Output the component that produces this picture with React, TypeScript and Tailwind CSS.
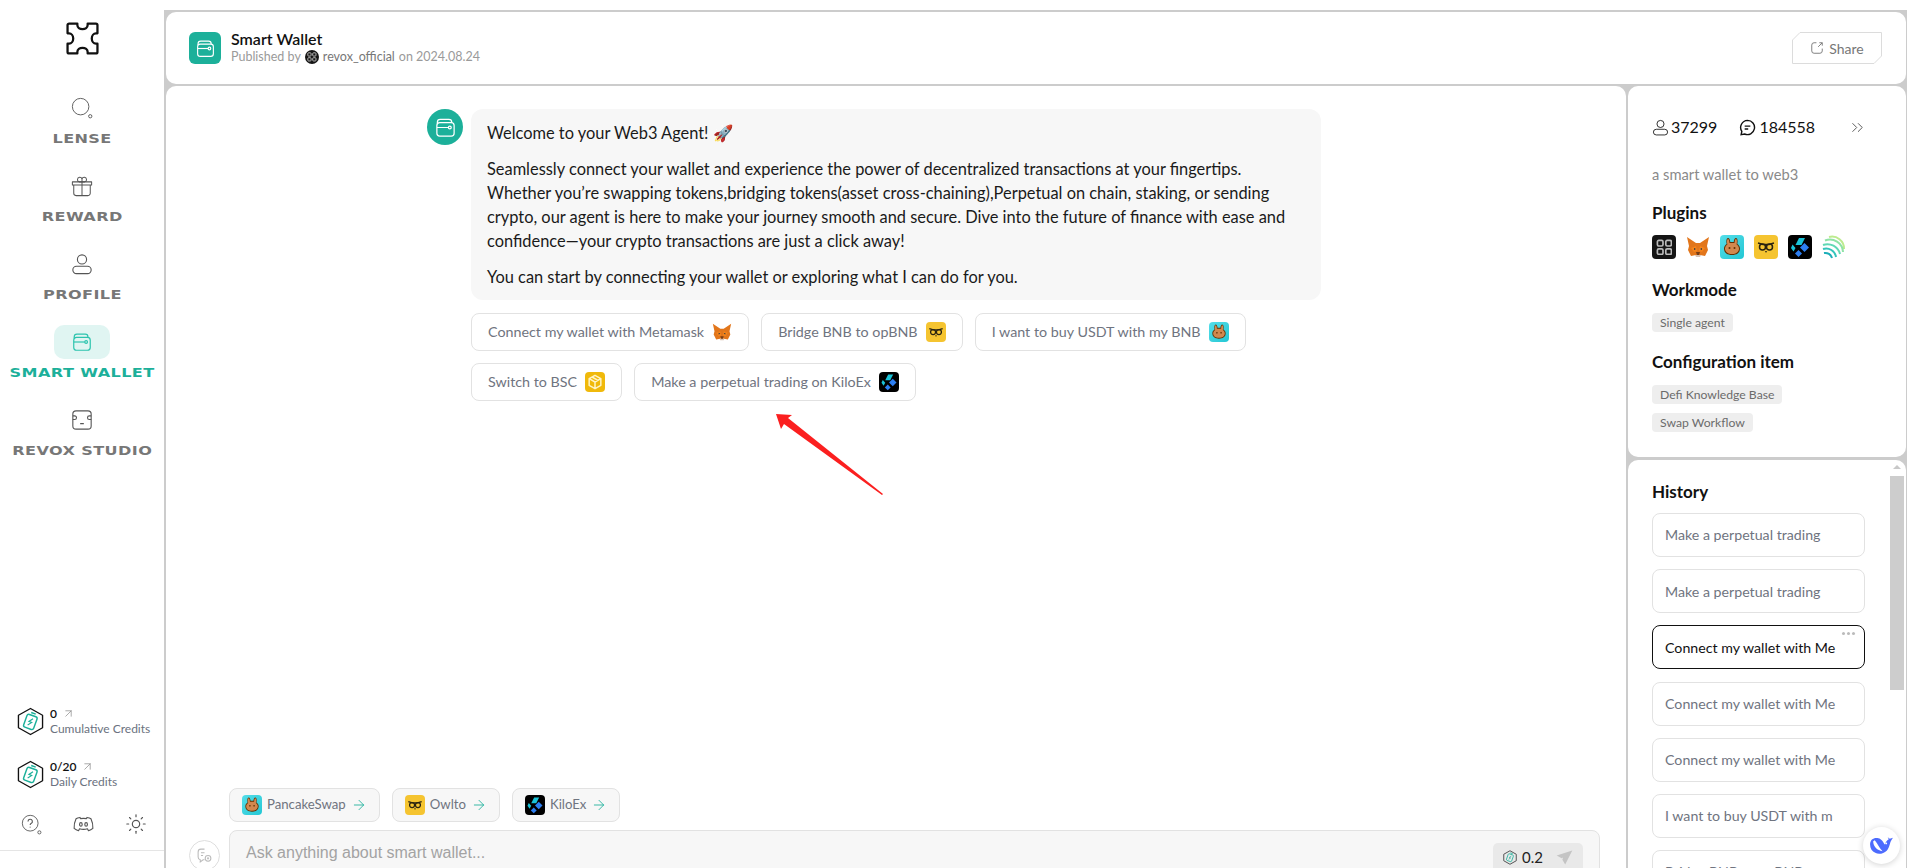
import { ArrowRight, ArrowUpRight, ChevronsRight, Sun } from "lucide-react";

function WalletIcon({ className }: { className?: string }) {
  return (
    <svg viewBox="0 0 24 24" fill="none" stroke="currentColor" strokeWidth="1.3" className={className}>
      <path d="M3.5 8V6.5a3 3 0 0 1 3-3h9a3 3 0 0 1 3 3V7" />
      <rect x="3" y="7" width="18" height="14" rx="3" />
      <path d="M3 12h12" />
      <circle cx="16.5" cy="12" r="1.5" />
    </svg>
  );
}

function LensIcon({ className }: { className?: string }) {
  return (
    <svg viewBox="0 0 24 24" fill="none" stroke="currentColor" strokeWidth="1" className={className}>
      <circle cx="10.5" cy="10.5" r="9" />
      <circle cx="21" cy="21" r="1.8" />
    </svg>
  );
}

function GiftIcon({ className }: { className?: string }) {
  return (
    <svg viewBox="0 0 24 24" fill="none" stroke="currentColor" strokeWidth="1.1" className={className}>
      <path d="M1.5 7.5h21V11h-21z" strokeLinejoin="round" />
      <path d="M3 11v9a2.5 2.5 0 0 0 2.5 2.5h13A2.5 2.5 0 0 0 21 20v-9" />
      <path d="M12 7.5v15" />
      <path d="M12 7.5H9a2.5 2.5 0 1 1 3-3zM12 7.5h3a2.5 2.5 0 1 0-3-3z" />
    </svg>
  );
}

function UserIcon({ className }: { className?: string }) {
  return (
    <svg viewBox="0 0 24 24" fill="none" stroke="currentColor" strokeWidth="1.2" className={className}>
      <circle cx="12" cy="7" r="5" />
      <rect x="2" y="14.5" width="20" height="8" rx="4" />
    </svg>
  );
}

function RobotIcon({ className }: { className?: string }) {
  return (
    <svg viewBox="0 0 24 24" fill="none" stroke="currentColor" strokeWidth="1.2" className={className}>
      <rect x="2" y="2" width="20" height="20" rx="3.5" />
      <path d="M2 7.5h2a2 2 0 0 1 0 4H2M22 7.5h-2a2 2 0 0 0 0 4h2M10 16h4" />
    </svg>
  );
}

function PuzzleLogo() {
  return (
    <svg viewBox="0 0 32 32" fill="none" stroke="#111" strokeWidth="2.2" strokeLinejoin="round" className="h-[33px] w-[33px]">
      <path d="M3 1.5H11V3a5 4 0 0 0 10 0V1.5H29A1.5 1.5 0 0 1 30.5 3V11H29a4 5 0 0 0 0 10h1.5V29A1.5 1.5 0 0 1 29 30.5H21V29a5 4 0 0 0-10 0v1.5H3A1.5 1.5 0 0 1 1.5 29V21H3a4 5 0 0 0 0-10H1.5V3A1.5 1.5 0 0 1 3 1.5z" />
    </svg>
  );
}

function CreditHex({ small }: { small?: boolean }) {
  return (
    <svg viewBox="0 0 28 30" fill="none" className={small ? "h-[15px] w-[14px]" : "h-[29px] w-[27px]"}>
      <path d="M14 1.5 26.5 8.5v13L14 28.5 1.5 21.5v-13z" stroke={small ? "#555" : "#111"} strokeWidth={small ? 2 : 1.4} strokeLinejoin="round" />
      <g transform="rotate(20 14 15)" stroke="#1cb09a" strokeWidth="1.5">
        <rect x="8.5" y="8.5" width="11" height="14" rx="2" />
        <path d="M11.5 6h5" />
        <path d="M15.5 11.5 12.5 15.5h3l-3 4" strokeWidth="1.2" />
      </g>
    </svg>
  );
}

function HelpIcon() {
  return (
    <svg viewBox="0 0 24 24" fill="none" stroke="#555" strokeWidth="1" className="h-[21px] w-[21px]">
      <circle cx="10.5" cy="10.5" r="9" />
      <path d="M8 8.5a2.5 2.5 0 1 1 3.5 2.3c-.7.3-1 .8-1 1.7M10.5 14.5v1" strokeWidth="1.3" />
      <circle cx="21" cy="21" r="1.8" />
    </svg>
  );
}

function DiscordIcon() {
  return (
    <svg viewBox="0 0 24 20" fill="none" stroke="#555" strokeWidth="1.3" strokeLinejoin="round" className="h-[18px] w-[21px]">
      <path d="M8 2.5C6 2.8 4.5 3.3 3.5 4 1.8 7.5 1 11 1.3 15c1.5 1.3 3.2 2.2 5 2.7l1.2-2.2c2.8.8 6.2.8 9 0l1.2 2.2c1.8-.5 3.5-1.4 5-2.7.3-4-.5-7.5-2.2-11-1-.7-2.5-1.2-4.5-1.5l-.6 1.3c-2.2-.3-4.6-.3-6.8 0z" />
      <ellipse cx="9" cy="10.5" rx="1.5" ry="2" />
      <ellipse cx="15" cy="10.5" rx="1.5" ry="2" />
    </svg>
  );
}

function RevoxBadge({ className }: { className: string }) {
  return (
    <span className={`flex items-center justify-center bg-[#151515] ${className}`}>
      <svg viewBox="0 0 24 24" fill="none" stroke="#bbb" strokeWidth="2.4" className="h-[70%] w-[70%]">
        <rect x="2" y="2" width="8" height="8" rx="2" />
        <rect x="14" y="2" width="8" height="8" rx="2" />
        <rect x="2" y="14" width="8" height="8" rx="2" />
        <rect x="14" y="14" width="8" height="8" rx="2" />
      </svg>
    </span>
  );
}

function Fox({ className }: { className: string }) {
  return (
    <svg viewBox="0 0 24 24" className={className}>
      <path fill="#e2761b" d="M1 2l9 6h4l9-6-2 9 1 4-3 6-5-1h-4l-5 1-3-6 1-4z" />
      <path fill="#f6851b" d="M5 13l5-2 1 5-3 1zM19 13l-5-2-1 5 3 1z" />
      <path fill="#233447" d="M8 13l2 1-2 1zM16 13l-2 1 2 1z" />
      <path fill="#d7c1b3" d="M9 20h6l-1 2h-4z" />
      <path fill="#763d16" d="M10 17h4l-1 3h-2z" />
    </svg>
  );
}

function Bunny({ className }: { className: string }) {
  return (
    <svg viewBox="0 0 24 24" className={`rounded-[4px] bg-gradient-to-br from-[#53dee9] to-[#1fc7d4] ${className}`}>
      <path fill="#633001" d="M8 3c1.5 0 2 2 2.3 4h3.4c.3-2 .8-4 2.3-4s2 3 1.3 6c1.5 1 2.700 2.500 2.700 4.500C20 18 16.500 20 12 20s-8-2-8-6.500c0-2 1.200-3.500 2.700-4.500C6 6 6.500 3 8 3z" />
      <path fill="#d1884f" d="M8 4c1 0 1.300 2 1.500 4h5c.2-2 .5-4 1.500-4s1.300 3 .6 5.500C18 10.500 19 12 19 13.500 19 17 16 19 12 19s-7-2-7-5.500c0-1.500 1-3 2.400-4C6.700 7 7 4 8 4z" />
      <circle cx="9.5" cy="13" r="1" fill="#633001" />
      <circle cx="14.5" cy="13" r="1" fill="#633001" />
    </svg>
  );
}

function Owl({ className }: { className: string }) {
  return (
    <svg viewBox="0 0 24 24" className={`rounded-[4px] bg-[#f5c430] ${className}`}>
      <path fill="none" stroke="#2b2410" strokeWidth="1.5" d="M4 8l5 1.5h6L20 8" />
      <circle cx="8.5" cy="12" r="3" fill="none" stroke="#2b2410" strokeWidth="1.5" />
      <circle cx="15.5" cy="12" r="3" fill="none" stroke="#2b2410" strokeWidth="1.5" />
      <path fill="#2b2410" d="M11 16h2l-1 2z" />
    </svg>
  );
}

function Kilo({ className }: { className: string }) {
  return (
    <svg viewBox="0 0 24 24" className={`rounded-[4px] bg-black ${className}`}>
      <path fill="#19c3d8" d="M11 3h6l-3.5 7h-6z" />
      <path fill="#19c3d8" d="M4.5 9.500l3 3.500-2 3.500-2.500-3.500z" />
      <path fill="#2d7ff2" d="M16.5 8l4.500 4.500-4.500 4.500-4.500-4.500z" />
      <path fill="#2d7ff2" d="M10.5 15l3.500 3.500-3.500 3.500-3.500-3.500z" />
    </svg>
  );
}

function Bsc({ className }: { className: string }) {
  return (
    <svg viewBox="0 0 24 24" className={`rounded-[4px] bg-[#f0b90b] ${className}`}>
      <path fill="none" stroke="#fff3c4" strokeWidth="1.8" strokeLinejoin="round" d="M12 4l7 4v8l-7 4-7-4V8zM5 8l7 4 7-4M12 12v8M8.5 6l7 4" />
    </svg>
  );
}

function Stripes({ className }: { className: string }) {
  return (
    <svg viewBox="0 0 24 24" fill="none" strokeWidth="2" className={className}>
      <path stroke="#bdeb8f" d="M7 2a12 12 0 0 1 15 12" />
      <path stroke="#8fe3a6" d="M3 5.5A13 13 0 0 1 21 17" />
      <path stroke="#5fd8b4" d="M1 10a13 13 0 0 1 17 9" />
      <path stroke="#33c4bb" d="M1 14a10 10 0 0 1 13 8" />
      <path stroke="#1caeb8" d="M2 18a7 7 0 0 1 8 5" />
    </svg>
  );
}

function WhaleButton() {
  return (
    <div className="absolute left-[1863px] top-[827px] flex h-[37px] w-[37px] items-center justify-center rounded-full bg-white shadow-[0_1px_6px_rgba(0,0,0,0.18)]">
      <svg viewBox="0 0 26 20" className="h-[21px] w-[27px]">
        <path fill="#4d6bfe" d="M2 9C2 4 6 2 10 3c3 .5 5 4 6 6 1-2 2-4 4-5l-1-2 2 1.5 3-1-1.5 2.5C21 7 21 12 18 15c-3 3-8 4-11 2-3-1.5-5-4-5-8z" />
        <path fill="#fff" d="M5 6c0 5 4 9 9 9.5C10.5 12 9.5 8.5 6.5 5z" />
        <circle cx="17.5" cy="8" r="0.9" fill="#fff" />
      </svg>
    </div>
  );
}

const navItems = [
  { label: "LENSE", icon: <LensIcon className="h-[22px] w-[22px]" /> },
  { label: "REWARD", icon: <GiftIcon className="h-[22px] w-[22px]" /> },
  { label: "PROFILE", icon: <UserIcon className="h-[22px] w-[22px]" /> },
  { label: "SMART WALLET", icon: <WalletIcon className="h-[22px] w-[22px]" />, active: true },
  { label: "REVOX STUDIO", icon: <RobotIcon className="h-[22px] w-[22px]" /> },
];

function Sidebar() {
  return (
    <aside className="flex h-full w-[164px] shrink-0 flex-col items-center">
      <div className="mt-[21px] mb-[36px] flex h-[34px] items-center">
        <PuzzleLogo />
      </div>
      <nav className="flex w-full flex-col items-center gap-[9px]">
        {navItems.map((item) => (
          <div key={item.label} className="flex h-[69px] w-full flex-col items-center">
            <div
              className={`flex h-[34px] w-[56px] items-center justify-center rounded-[10px] ${
                item.active ? "bg-[#e0f5f2] text-[#2cc4ae]" : "text-[#555]"
              }`}
            >
              {item.icon}
            </div>
            <span
              className={`mt-[7px] origin-center scale-x-[1.34] whitespace-nowrap font-['DejaVu_Sans'] text-[12px] font-bold leading-[14px] tracking-[0.3px] ${
                item.active ? "text-[#1cb09a]" : "text-[#777]"
              }`}
            >
              {item.label}
            </span>
          </div>
        ))}
      </nav>
      <div className="mt-auto flex w-full flex-col pl-[17px]">
        <CreditRow value="0" label="Cumulative Credits" />
        <div className="h-[23px]" />
        <CreditRow value="0/20" label="Daily Credits" />
        <div className="mt-[24px] flex w-[130px] items-center justify-between pl-[4px]">
          <HelpIcon />
          <DiscordIcon />
          <Sun className="h-[22px] w-[22px] text-[#555]" strokeWidth={1.3} />
        </div>
      </div>
      <div className="mt-[15px] mb-[17px] h-[1px] w-full bg-[#e5e5e5]" />
    </aside>
  );
}

function CreditRow({ value, label }: { value: string; label: string }) {
  return (
    <div className="flex h-[30px] items-center gap-[6px]">
      <CreditHex />
      <div className="flex flex-col">
        <span className="flex items-center gap-[5px] text-[12px] font-semibold leading-[15px] text-[#111]">
          {value}
          <ArrowUpRight className="h-[13px] w-[13px] text-[#888]" strokeWidth={1.3} />
        </span>
        <span className="text-[12px] leading-[15px] text-[#6b7280]">{label}</span>
      </div>
    </div>
  );
}

function ShareButton() {
  return (
    <button className="relative flex h-[32px] w-[90px] items-center justify-center gap-[5px] text-[14px] text-[#777]">
      <svg viewBox="0 0 90 32" fill="none" className="absolute inset-0 h-full w-full">
        <path d="M8 .5H89.5V24L82 31.5H.5V8z" stroke="#dcdcdc" />
      </svg>
      <svg viewBox="0 0 24 24" fill="none" stroke="#777" strokeWidth="1.6" className="h-[14px] w-[14px]">
        <path d="M11 3H7a4 4 0 0 0-4 4v10a4 4 0 0 0 4 4h10a4 4 0 0 0 4-4v-4" />
        <path d="M14 10l7-7M16 3h5v5" />
      </svg>
      Share
    </button>
  );
}

function Header() {
  return (
    <header className="flex h-[72px] shrink-0 items-center rounded-[10px] bg-white pl-[23px] pr-[24px]">
      <div className="flex h-[32px] w-[32px] items-center justify-center rounded-[6px] bg-[#1cb09a] text-white">
        <WalletIcon className="h-[21px] w-[21px]" />
      </div>
      <div className="ml-[10px] flex flex-col">
        <span className="text-[16px] font-semibold leading-[18px] text-[#111]">Smart Wallet</span>
        <span className="flex items-center text-[12.5px] leading-[18px] text-[#9a9a9a]">
          Published by
          <RevoxBadge className="mx-[4px] h-[14px] w-[14px] rounded-full" />
          <span className="text-[#777]">revox_official</span>
          <span className="ml-[4px]">on 2024.08.24</span>
        </span>
      </div>
      <div className="ml-auto">
        <ShareButton />
      </div>
    </header>
  );
}

function Suggestion({ text, icon }: { text: string; icon: React.ReactNode }) {
  return (
    <button className="flex h-[38px] items-center gap-[8px] rounded-[8px] border border-[#e2e2e2] bg-white px-[16px] text-[14.3px] text-[#6f7480]">
      {text}
      {icon}
    </button>
  );
}

function Chat() {
  return (
    <div className="ml-[261px] flex w-[894px] gap-[8px] pt-[23px]">
      <div className="flex h-[36px] w-[36px] shrink-0 items-center justify-center rounded-full bg-[#1cb09a] text-white">
        <WalletIcon className="h-[23px] w-[23px]" />
      </div>
      <div className="min-w-0 flex-1">
        <div className="flex flex-col gap-[12px] rounded-[12px] bg-[#f7f7f7] px-[16px] pb-[11px] pt-[12px] text-[16.4px] leading-[24px] text-[#1a1a1a]">
          <p>Welcome to your Web3 Agent! 🚀</p>
          <p>
            Seamlessly connect your wallet and experience the power of decentralized transactions at your fingertips.
            Whether you’re swapping tokens,bridging tokens(asset cross-chaining),Perpetual on chain, staking, or sending
            crypto, our agent is here to make your journey smooth and secure. Dive into the future of finance with ease
            and confidence—your crypto transactions are just a click away!
          </p>
          <p>You can start by connecting your wallet or exploring what I can do for you.</p>
        </div>
        <div className="mt-[13px] flex flex-col gap-[12px]">
          <div className="flex gap-[12px]">
            <Suggestion text="Connect my wallet with Metamask" icon={<Fox className="h-[20px] w-[20px]" />} />
            <Suggestion text="Bridge BNB to opBNB" icon={<Owl className="h-[20px] w-[20px]" />} />
            <Suggestion text="I want to buy USDT with my BNB" icon={<Bunny className="h-[20px] w-[20px]" />} />
          </div>
          <div className="flex gap-[12px]">
            <Suggestion text="Switch to BSC" icon={<Bsc className="h-[20px] w-[20px]" />} />
            <Suggestion text="Make a perpetual trading on KiloEx" icon={<Kilo className="h-[20px] w-[20px]" />} />
          </div>
        </div>
      </div>
    </div>
  );
}

function PluginChip({ name, icon }: { name: string; icon: React.ReactNode }) {
  return (
    <div className="flex h-[34px] items-center gap-[5px] rounded-[8px] border border-[#e2e2e2] bg-[#f7f7f7] px-[12px] text-[13.2px] text-[#6f7480]">
      {icon}
      {name}
      <ArrowRight className="h-[16px] w-[16px] text-[#1cb09a]" strokeWidth={1.3} />
    </div>
  );
}

function Composer() {
  return (
    <div className="mb-[-12px] flex flex-col pl-[23px] pr-[26px]">
      <div className="ml-[40px] flex gap-[12px]">
        <PluginChip name="PancakeSwap" icon={<Bunny className="h-[20px] w-[20px]" />} />
        <PluginChip name="Owlto" icon={<Owl className="h-[20px] w-[20px]" />} />
        <PluginChip name="KiloEx" icon={<Kilo className="h-[20px] w-[20px]" />} />
      </div>
      <div className="mt-[8px] flex items-start gap-[9px]">
        <div className="mt-[10px] flex h-[31px] w-[31px] shrink-0 items-center justify-center rounded-full border border-[#dedede]">
          <svg viewBox="0 0 24 24" fill="none" stroke="#bbb" strokeWidth="1.5" className="h-[17px] w-[17px]">
            <path d="M12 3H7a4 4 0 0 0-4 4v7a4 4 0 0 0 3 4v3l4-3h2" />
            <path d="M7 8h5M7 12h3" />
            <circle cx="17" cy="16" r="4" />
            <path d="M17 14.5v3M15.5 16h3" />
          </svg>
        </div>
        <div className="flex h-[50px] flex-1 items-start rounded-[8px] border border-[#e2e2e2] bg-[#f7f7f7] pl-[16px] pr-[16px] pt-[12px]">
          <span className="font-['Liberation_Sans'] text-[16px] leading-[20px] text-[#a3a3a3]">
            Ask anything about smart wallet...
          </span>
          <div className="ml-auto flex h-[28px] w-[90px] items-center justify-center gap-[5px] rounded-t-[5px] bg-[#e9e9e9]">
            <CreditHex small />
            <span className="text-[15px] text-[#222]">0.2</span>
            <svg viewBox="0 0 24 24" className="ml-[8px] h-[17px] w-[17px]">
              <path fill="#c4c4c4" d="M23 2 1 9l7 4 2-1-1 3 4 7z" />
            </svg>
          </div>
        </div>
      </div>
    </div>
  );
}

function InfoPanel() {
  return (
    <section className="flex h-[371px] shrink-0 flex-col rounded-[10px] bg-white pl-[24px] pr-[24px] pt-[31px]">
      <div className="flex items-center text-[16px] leading-[20px] text-[#111]">
        <UserIcon className="h-[17px] w-[17px]" />
        <span className="ml-[2px]">37299</span>
        <svg viewBox="0 0 24 24" fill="none" stroke="#111" strokeWidth="2" className="ml-[22px] h-[17px] w-[17px]">
          <path d="M12 2a10 10 0 1 1-4 19.2L3 22l1-4.500A10 10 0 0 1 12 2z" />
          <path d="M8 10h8M8 14h5" />
        </svg>
        <span className="ml-[3px]">184558</span>
        <ChevronsRight className="ml-[33px] h-[19px] w-[19px] text-[#555]" strokeWidth={1.2} />
      </div>
      <p className="mt-[27px] text-[14.7px] leading-[20px] text-[#8a8a8a]">a smart wallet to web3</p>
      <h3 className="mt-[18px] text-[17px] font-bold leading-[22px] text-[#111]">Plugins</h3>
      <div className="mt-[11px] flex gap-[10px]">
        <RevoxBadge className="h-[24px] w-[24px] rounded-[4px]" />
        <Fox className="h-[24px] w-[24px]" />
        <Bunny className="h-[24px] w-[24px]" />
        <Owl className="h-[24px] w-[24px]" />
        <Kilo className="h-[24px] w-[24px]" />
        <Stripes className="h-[24px] w-[24px]" />
      </div>
      <h3 className="mt-[20px] text-[17px] font-bold leading-[22px] text-[#111]">Workmode</h3>
      <div className="mt-[12px] flex">
        <Tag>Single agent</Tag>
      </div>
      <h3 className="mt-[19px] text-[17px] font-bold leading-[22px] text-[#111]">Configuration item</h3>
      <div className="mt-[12px] flex flex-col items-start gap-[9px]">
        <Tag>Defi Knowledge Base</Tag>
        <Tag>Swap Workflow</Tag>
      </div>
    </section>
  );
}

function Tag({ children }: { children: React.ReactNode }) {
  return (
    <span className="rounded-[4px] bg-[#eeeeee] px-[8px] text-[12.2px] leading-[19px] text-[#6b6b6b]">{children}</span>
  );
}

const historyItems = [
  "Make a perpetual trading",
  "Make a perpetual trading",
  "Connect my wallet with Me",
  "Connect my wallet with Me",
  "Connect my wallet with Me",
  "I want to buy USDT with m",
  "Bridge BNB to opBNB",
];

function HistoryPanel() {
  return (
    <section className="flex min-h-0 flex-1 overflow-hidden rounded-t-[10px] bg-white">
      <div className="w-[262px] shrink-0 pl-[24px] pt-[21px]">
        <h3 className="text-[17px] font-bold leading-[22px] text-[#111]">History</h3>
        <div className="mt-[10px] flex w-[213px] flex-col gap-[12.2px]">
          {historyItems.map((item, i) => (
            <div
              key={i}
              className={`relative flex h-[44px] shrink-0 items-center overflow-hidden whitespace-nowrap rounded-[8px] border px-[12px] text-[14.2px] ${
                i === 2 ? "border-[#111] text-[#111]" : "border-[#e2e2e2] text-[#6f7480]"
              }`}
            >
              {item}
              {i === 2 && (
                <span className="absolute right-[9px] top-[6px] flex gap-[2px]">
                  <i className="h-[3px] w-[3px] rounded-full bg-[#bbb]" />
                  <i className="h-[3px] w-[3px] rounded-full bg-[#bbb]" />
                  <i className="h-[3px] w-[3px] rounded-full bg-[#bbb]" />
                </span>
              )}
            </div>
          ))}
        </div>
      </div>
      <div className="flex w-[14px] shrink-0 flex-col items-center pt-[5px]">
        <div className="h-0 w-0 border-x-[4px] border-b-[4px] border-x-transparent border-b-[#c8c8c8]" />
        <div className="mt-[7px] h-[214px] w-full bg-[#cdcdcd]" />
      </div>
    </section>
  );
}

export default function App() {
  return (
    <div className="relative flex h-[868px] w-full overflow-hidden bg-white font-['Lato',sans-serif]">
      <Sidebar />
      <div className="flex min-w-0 flex-1 flex-col pr-[2px] pt-[10px]">
        <div className="flex min-h-0 flex-1 flex-col gap-[2px] bg-[#cccccc] pl-[2px] pr-[1px] pt-[2px]">
          <Header />
          <div className="flex min-h-0 flex-1 gap-[2px]">
            <main className="flex min-w-0 flex-1 flex-col justify-between overflow-hidden rounded-t-[10px] bg-white">
              <Chat />
              <Composer />
            </main>
            <div className="flex w-[278px] shrink-0 flex-col gap-[3px]">
              <InfoPanel />
              <HistoryPanel />
            </div>
          </div>
        </div>
      </div>
      <svg viewBox="0 0 120 90" fill="none" className="absolute left-[772px] top-[410px] h-[90px] w-[120px]">
        <path fill="#fb1f1f" d="M4 4l16 1-4 3 95 76-1 1L12 14l-3 5z" />
      </svg>
      <WhaleButton />
    </div>
  );
}
